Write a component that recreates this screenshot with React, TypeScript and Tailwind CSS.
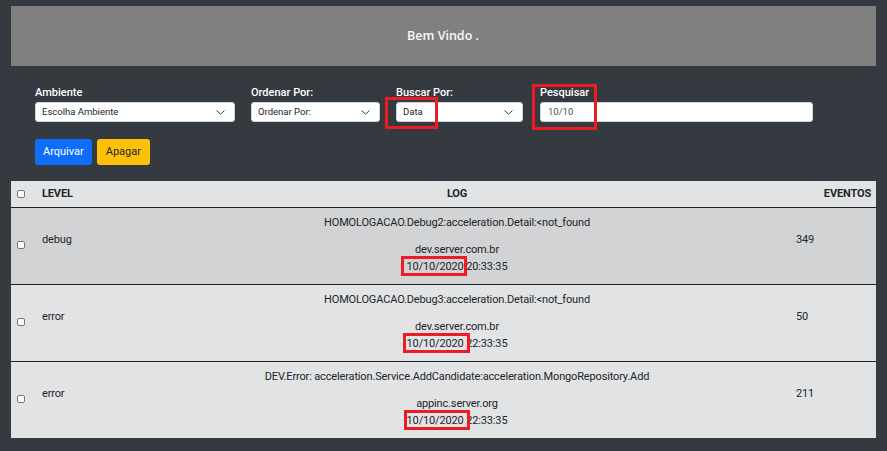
import React from 'react';

type LogRow = {
  level: string;
  message: string;
  host: string;
  date: string;
  time: string;
  events: number;
  highlight: boolean;
  box: string;
};

const rows: LogRow[] = [
  {
    level: 'debug',
    message: 'HOMOLOGACAO.Debug2:acceleration.Detail:<not_found',
    host: 'dev.server.com.br',
    date: '10/10/2020',
    time: '20:33:35',
    events: 349,
    highlight: true,
    box: 'left-[-6px] right-[-3px] top-[-4px] bottom-[-3px]',
  },
  {
    level: 'error',
    message: 'HOMOLOGACAO.Debug3:acceleration.Detail:<not_found',
    host: 'dev.server.com.br',
    date: '10/10/2020',
    time: '22:33:35',
    events: 50,
    highlight: false,
    box: 'left-[-4px] right-[-6px] top-[-4px] bottom-[-3px]',
  },
  {
    level: 'error',
    message: 'DEV.Error: acceleration.Service.AddCandidate:acceleration.MongoRepository.Add',
    host: 'appinc.server.org',
    date: '10/10/2020',
    time: '22:33:35',
    events: 211,
    highlight: false,
    box: 'left-[-3px] right-[-6px] top-[-4px] bottom-[-3px]',
  },
];

const Chevron = () => (
  <svg width="9" height="5" viewBox="0 0 9 5" fill="none" className="shrink-0">
    <path d="M0.8 0.8 L4.5 4.1 L8.2 0.8" stroke="#343a40" strokeWidth="1" strokeLinecap="round" strokeLinejoin="round" />
  </svg>
);

const Box = () => (
  <span className="block w-[8px] h-[8px] rounded-[2px] border border-[#767676] bg-white" />
);

const Select = ({ value, width }: { value: string; width: string }) => (
  <div className={`${width} h-[20px] bg-white rounded-[3px] border border-[#ced4da] flex items-center justify-between pl-[6px] pr-[9px] text-[9.5px] text-[#212529]`}>
    <span>{value}</span>
    <Chevron />
  </div>
);

const Field = ({ label, children }: { label: string; children: React.ReactNode }) => (
  <div className="flex flex-col gap-[2px]">
    <label className="text-[11px] leading-[14px] font-medium text-white">{label}</label>
    {children}
  </div>
);

export default function App() {
  return (
    <div className="min-h-[451px] bg-[#343a40] pt-[6px] pb-[13px] font-['Roboto',sans-serif] text-[#212529]">
      <div className="mx-[11px] h-[60px] bg-[#808080] flex items-center justify-center">
        <h1 className="font-['Open_Sans',sans-serif] text-[12.5px] font-semibold text-[#f8f9fa] pr-[1px]">Bem Vindo .</h1>
      </div>

      <div className="relative px-[35px] pt-[20px]">
        <div className="flex gap-[16px]">
          <Field label="Ambiente">
            <Select value="Escolha Ambiente" width="w-[200px]" />
          </Field>
          <Field label="Ordenar Por:">
            <Select value="Ordenar Por:" width="w-[129px]" />
          </Field>
          <Field label="Buscar Por:">
            <div className="relative">
              <Select value="Data" width="w-[127px]" />
              <span className="absolute left-[-11px] top-[-5px] w-[53px] h-[32px] border-[3px] border-[#ed1c24]" />
            </div>
          </Field>
          <div className="relative ml-[1px]">
            <Field label="Pesquisar">
              <div className="w-[273px] h-[20px] bg-white rounded-[3px] border border-[#ced4da] flex items-center pl-[7px] text-[9.5px] text-[#495057]">
                10/10
              </div>
            </Field>
            <span className="absolute left-[-8px] top-[-2px] w-[65px] h-[46px] border-[3px] border-[#ed1c24]" />
          </div>
        </div>

        <div className="flex gap-[5px] mt-[17px]">
          <button className="h-[26px] px-[8px] rounded-[3px] bg-[#0d6efd] text-white text-[11px]">Arquivar</button>
          <button className="h-[26px] px-[9px] rounded-[3px] bg-[#ffc107] text-[#212529] text-[11px]">Apagar</button>
        </div>
      </div>

      <div className="mx-[11px] mt-[16px] bg-[#e2e3e5] text-[11px] tracking-[-0.15px]">
        <div className="flex items-center h-[26px] font-bold">
          <div className="w-[31px] pl-[6px]"><Box /></div>
          <div className="w-[88px]">LEVEL</div>
          <div className="w-[654px] text-center">LOG</div>
          <div className="flex-1 text-right pr-[5px]">EVENTOS</div>
        </div>
        {rows.map((r, i) => (
          <div
            key={i}
            className={`flex h-[77px] border-t border-[#212121] ${r.highlight ? 'bg-[#d2d3d5]' : 'bg-[#e2e3e5]'}`}
          >
            <div className="w-[31px] pl-[6px] pt-[33px]"><Box /></div>
            <div className="w-[88px] pt-[23px] leading-[17px]">{r.level}</div>
            <div className="w-[654px] pt-[6px] text-center leading-[17px]">
              <p className="mb-[10px] whitespace-nowrap">{r.message}</p>
              <p>{r.host}</p>
              <p>
                <span className="relative">
                  {r.date}
                  <span className={`absolute ${r.box} border-[3px] border-[#ed1c24]`} />
                </span>{' '}
                {r.time}
              </p>
            </div>
            <div className="flex-1 pt-[23px] pl-[12px] leading-[17px]">{r.events}</div>
          </div>
        ))}
      </div>
    </div>
  );
}
